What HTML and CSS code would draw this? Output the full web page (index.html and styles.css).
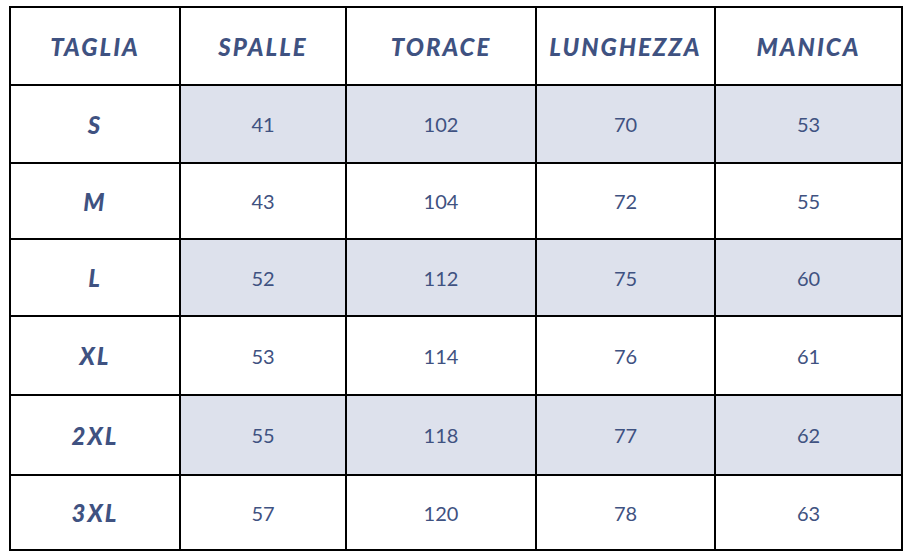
FILE: index.html
```html
<!DOCTYPE html>
<html lang="it">
<head>
<meta charset="utf-8">
<title>Tabella taglie</title>
<link rel="stylesheet" href="styles.css">
</head>
<body>
<div class="size-table">
  <div class="cell head">TAGLIA</div>
  <div class="cell head">SPALLE</div>
  <div class="cell head">TORACE</div>
  <div class="cell head">LUNGHEZZA</div>
  <div class="cell head">MANICA</div>

  <div class="cell size">S</div>
  <div class="cell num shade">41</div>
  <div class="cell num shade">102</div>
  <div class="cell num shade">70</div>
  <div class="cell num shade">53</div>

  <div class="cell size">M</div>
  <div class="cell num">43</div>
  <div class="cell num">104</div>
  <div class="cell num">72</div>
  <div class="cell num">55</div>

  <div class="cell size">L</div>
  <div class="cell num shade">52</div>
  <div class="cell num shade">112</div>
  <div class="cell num shade">75</div>
  <div class="cell num shade">60</div>

  <div class="cell size">XL</div>
  <div class="cell num">53</div>
  <div class="cell num">114</div>
  <div class="cell num">76</div>
  <div class="cell num">61</div>

  <div class="cell size">2XL</div>
  <div class="cell num shade">55</div>
  <div class="cell num shade">118</div>
  <div class="cell num shade">77</div>
  <div class="cell num shade">62</div>

  <div class="cell size">3XL</div>
  <div class="cell num">57</div>
  <div class="cell num">120</div>
  <div class="cell num">78</div>
  <div class="cell num">63</div>
</div>
</body>
</html>
```
FILE: styles.css
```css
html, body {
  background: #ffffff;
}
body {
  margin: 6px 0 0 9px;
  font-family: Lato, "Open Sans", sans-serif;
  color: #3f5281;
}
.size-table {
  display: grid;
  width: 894px;
  box-sizing: border-box;
  grid-template-columns: 168px 164px 188px 177px 185px;
  grid-template-rows: 76px 76px 74px 75px 77px 78px 73px;
  gap: 2px;
  padding: 2px;
  background: #000000;
}
.cell {
  background: #ffffff;
  display: flex;
  align-items: center;
  justify-content: center;
  box-sizing: border-box;
}
.shade {
  background: #dde1ec;
}
.head, .size {
  font-weight: 900;
  font-style: italic;
  font-size: 24px;
  letter-spacing: 2px;
}
.num {
  font-size: 20px;
  font-weight: 400;
}
```
